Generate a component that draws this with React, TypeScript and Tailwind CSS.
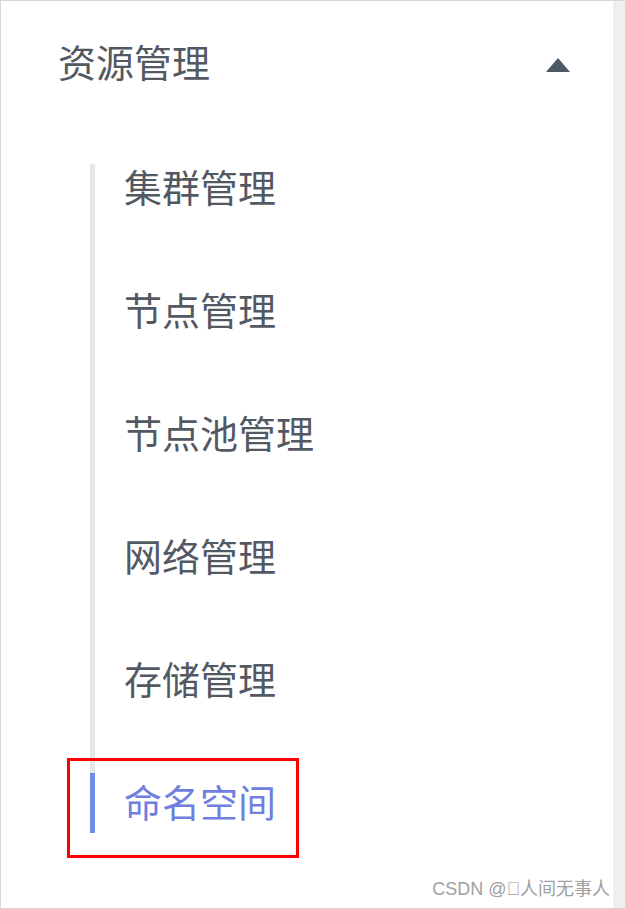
import React from 'react';

const cjk = { fontFamily: '"Noto Sans CJK SC", "Noto Sans", sans-serif' };

export default function App() {
  const items = ['集群管理', '节点管理', '节点池管理', '网络管理', '存储管理', '命名空间'];

  return (
    <div className="relative flex w-[626px] h-[909px] bg-white border border-[#d6d6d6] overflow-hidden" style={cjk}>
      <div className="flex flex-col flex-1">
        <div className="flex items-center justify-between h-[127px] pl-[57px] pr-[42px]">
          <span className="text-[38px] leading-none text-[#535962] pb-[7px]">资源管理</span>
          <svg width="26" height="16" viewBox="0 0 26 16">
            <path d="M13 1 L25 15 L1 15 Z" fill="#4d5766" />
          </svg>
        </div>

        {items.map((label, i) => {
          const first = i === 0;
          const active = i === items.length - 1;
          return (
            <div key={label} className="relative flex h-[123px]">
              <div className="ml-[89px] w-[5px] flex flex-col">
                {first && <div className="h-[36px]" />}
                {active ? (
                  <>
                    <div className="h-[30px] bg-[#e4e8e9]" />
                    <div className="h-[60px] bg-[#6f8cec]" />
                  </>
                ) : (
                  <div className="flex-1 bg-[#e4e8e9]" />
                )}
              </div>
              <div className="flex items-center ml-[29px] pb-[7px]">
                <span className={`text-[38px] leading-none ${active ? 'text-[#6f7fe0]' : 'text-[#535962]'}`}>
                  {label}
                </span>
              </div>
              {active && (
                <div className="absolute left-[66px] top-[15px] w-[232px] h-[100px] border-[3px] border-[#ff0000]" />
              )}
            </div>
          );
        })}
      </div>

      <div className="w-[12px] bg-[#efefef]" />

      <div className="absolute right-[15px] bottom-[10px] text-[18px] leading-none text-[#a0a0a0]" style={{ fontFamily: '"Liberation Sans", "Noto Sans CJK SC", sans-serif' }}>
        CSDN @{'\uE000'}人间无事人
      </div>
    </div>
  );
}
